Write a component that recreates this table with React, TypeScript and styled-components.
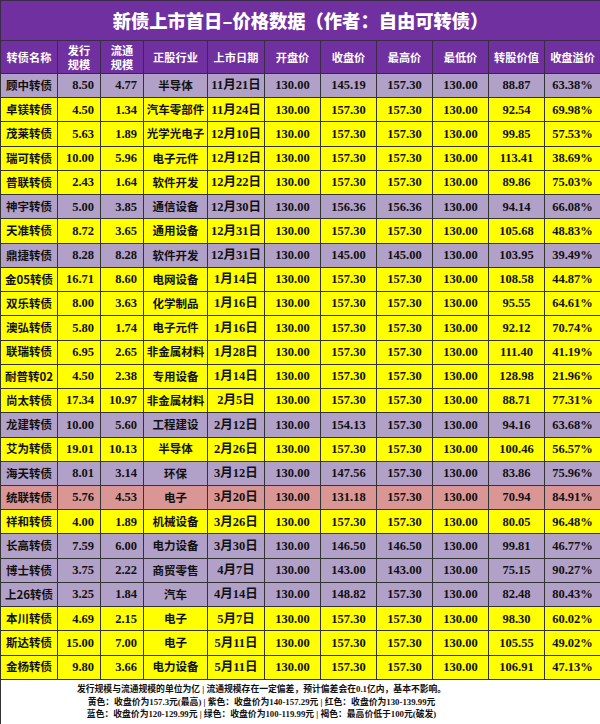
import React from "react";
import styled, { createGlobalStyle } from "styled-components";

const GlobalStyle = createGlobalStyle`
  html, body {
    margin: 0;
    padding: 0;
    background: #fff;
  }
`;

type Tone = "y" | "p" | "r";

const toneColors: Record<Tone, string> = {
  y: "#ffff00",
  p: "#b1a0c7",
  r: "#da9694",
};

// 名称, 发行规模, 流通规模, 行业, 日期, 开盘, 收盘, 最高, 最低, 转股价值, 溢价, 颜色
const rows: [string, string, string, string, string, string, string, string, string, string, string, Tone][] = [
  ["顾中转债", "8.50", "4.77", "半导体", "11月21日", "130.00", "145.19", "157.30", "130.00", "88.87", "63.38%", "p"],
  ["卓镁转债", "4.50", "1.34", "汽车零部件", "11月24日", "130.00", "157.30", "157.30", "130.00", "92.54", "69.98%", "y"],
  ["茂莱转债", "5.63", "1.89", "光学光电子", "12月10日", "130.00", "157.30", "157.30", "130.00", "99.85", "57.53%", "y"],
  ["瑞可转债", "10.00", "5.96", "电子元件", "12月12日", "130.00", "157.30", "157.30", "130.00", "113.41", "38.69%", "y"],
  ["普联转债", "2.43", "1.64", "软件开发", "12月22日", "130.00", "157.30", "157.30", "130.00", "89.86", "75.03%", "y"],
  ["神宇转债", "5.00", "3.85", "通信设备", "12月30日", "130.00", "156.36", "156.36", "130.00", "94.14", "66.08%", "p"],
  ["天准转债", "8.72", "3.65", "通用设备", "12月31日", "130.00", "157.30", "157.30", "130.00", "105.68", "48.83%", "y"],
  ["鼎捷转债", "8.28", "8.28", "软件开发", "12月31日", "130.00", "145.00", "145.00", "130.00", "103.95", "39.49%", "p"],
  ["金05转债", "16.71", "8.60", "电网设备", "1月14日", "130.00", "157.30", "157.30", "130.00", "108.58", "44.87%", "y"],
  ["双乐转债", "8.00", "3.63", "化学制品", "1月16日", "130.00", "157.30", "157.30", "130.00", "95.55", "64.61%", "y"],
  ["澳弘转债", "5.80", "1.74", "电子元件", "1月16日", "130.00", "157.30", "157.30", "130.00", "92.12", "70.74%", "y"],
  ["联瑞转债", "6.95", "2.65", "非金属材料", "1月28日", "130.00", "157.30", "157.30", "130.00", "111.40", "41.19%", "y"],
  ["耐普转02", "4.50", "2.38", "专用设备", "1月14日", "130.00", "157.30", "157.30", "130.00", "128.98", "21.96%", "y"],
  ["尚太转债", "17.34", "10.97", "非金属材料", "2月5日", "130.00", "157.30", "157.30", "130.00", "88.71", "77.31%", "y"],
  ["龙建转债", "10.00", "5.60", "工程建设", "2月12日", "130.00", "154.13", "157.30", "130.00", "94.16", "63.68%", "p"],
  ["艾为转债", "19.01", "10.13", "半导体", "2月26日", "130.00", "157.30", "157.30", "130.00", "100.46", "56.57%", "y"],
  ["海天转债", "8.01", "3.14", "环保", "3月12日", "130.00", "147.56", "157.30", "130.00", "83.86", "75.96%", "p"],
  ["统联转债", "5.76", "4.53", "电子", "3月20日", "130.00", "131.18", "157.30", "130.00", "70.94", "84.91%", "r"],
  ["祥和转债", "4.00", "1.89", "机械设备", "3月26日", "130.00", "157.30", "157.30", "130.00", "80.05", "96.48%", "y"],
  ["长高转债", "7.59", "6.00", "电力设备", "3月30日", "130.00", "146.50", "146.50", "130.00", "99.81", "46.77%", "p"],
  ["博士转债", "3.75", "2.22", "商贸零售", "4月7日", "130.00", "143.00", "143.00", "130.00", "75.15", "90.27%", "p"],
  ["上26转债", "3.25", "1.84", "汽车", "4月14日", "130.00", "148.82", "157.30", "130.00", "82.48", "80.43%", "p"],
  ["本川转债", "4.69", "2.15", "电子", "5月7日", "130.00", "157.30", "157.30", "130.00", "98.30", "60.02%", "y"],
  ["斯达转债", "15.00", "7.00", "电子", "5月11日", "130.00", "157.30", "157.30", "130.00", "105.55", "49.02%", "y"],
  ["金杨转债", "9.80", "3.66", "电力设备", "5月11日", "130.00", "157.30", "157.30", "130.00", "106.91", "47.13%", "y"],
];

const colWidths = [57, 43, 43, 64, 57, 56, 56, 56, 56, 56, 56];

const headers: React.ReactNode[] = [
  "转债名称",
  <>发行<br />规模</>,
  <>流通<br />规模</>,
  "正股行业",
  "上市日期",
  "开盘价",
  "收盘价",
  "最高价",
  "最低价",
  "转股价值",
  "收盘溢价",
];

const Page = styled.div`
  width: 600px;
  height: 724px;
  overflow: hidden;
`;

const Sheet = styled.table`
  width: 600px;
  border-collapse: collapse;
  table-layout: fixed;
`;

const TitleCell = styled.th`
  height: 39px;
  padding: 0;
  background: #7030a0;
  border: 1px solid #3a2a48;
  color: #fff;
  font-family: "Noto Sans CJK SC", sans-serif;
  font-size: 18.3px;
  font-weight: 900;
  text-align: center;
  line-height: 1;
`;

const HeadCell = styled.th`
  height: 32px;
  padding: 0;
  background: #7030a0;
  border: 1px solid #3a2a48;
  color: #fff;
  font-family: "Noto Sans CJK SC", sans-serif;
  font-size: 11.2px;
  font-weight: 700;
  line-height: 14.5px;
  text-align: center;
`;

const DataRow = styled.tr<{ $tone: Tone }>`
  height: 24.24px;
  background: ${(p) => toneColors[p.$tone]};
`;

type Kind = "name" | "text" | "num" | "right" | "date";

const Cell = styled.td<{ $kind: Kind }>`
  padding: ${(p) => (p.$kind === "right" ? "0 6px 0 0" : "0")};
  border: 1px solid #333;
  color: #111;
  font-weight: 700;
  line-height: 1;
  white-space: nowrap;
  text-align: ${(p) => (p.$kind === "right" ? "right" : "center")};
  font-family: ${(p) =>
    p.$kind === "name" || p.$kind === "text"
      ? `"Noto Sans CJK SC", sans-serif`
      : `"Liberation Serif", "Noto Sans CJK SC", serif`};
  font-size: ${(p) =>
    p.$kind === "name" || p.$kind === "text" ? "11.5px" : "12.5px"};
`;

const NoteCell = styled.td`
  height: 44px;
  padding: 0 78px 0 0;
  background: #fff;
  border: 1px solid #333;
  color: #111;
  font-family: "Liberation Serif", "Noto Sans CJK SC", serif;
  font-size: 8.8px;
  font-weight: 700;
  line-height: 12.4px;
  text-align: center;
  vertical-align: middle;
`;

const kinds: Kind[] = [
  "name",
  "right",
  "right",
  "text",
  "date",
  "num",
  "num",
  "num",
  "num",
  "num",
  "num",
];

export default function App() {
  return (
    <Page>
      <GlobalStyle />
      <Sheet>
        <colgroup>
          {colWidths.map((w, i) => (
            <col key={i} style={{ width: w }} />
          ))}
        </colgroup>
        <thead>
          <tr>
            <TitleCell colSpan={11}>新债上市首日–价格数据（作者：自由可转债）</TitleCell>
          </tr>
          <tr>
            {headers.map((h, i) => (
              <HeadCell key={i}>{h}</HeadCell>
            ))}
          </tr>
        </thead>
        <tbody>
          {rows.map((r) => (
            <DataRow key={r[0]} $tone={r[11]}>
              {r.slice(0, 11).map((v, i) => (
                <Cell key={i} $kind={kinds[i]}>
                  {v}
                </Cell>
              ))}
            </DataRow>
          ))}
          <tr>
            <NoteCell colSpan={11}>
              发行规模与流通规模的单位为亿 | 流通规模存在一定偏差，预计偏差会在0.1亿内，基本不影响。
              <br />
              黄色：收盘价为157.3元(最高) | 紫色：收盘价为140-157.29元 | 红色：收盘价为130-139.99元
              <br />
              蓝色：收盘价为120-129.99元 | 绿色：收盘价为100-119.99元 | 褐色：最高价低于100元(破发)
            </NoteCell>
          </tr>
        </tbody>
      </Sheet>
    </Page>
  );
}
